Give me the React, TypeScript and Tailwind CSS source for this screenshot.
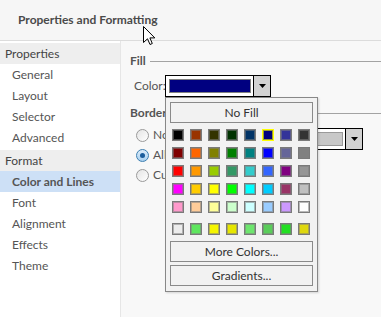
import React from "react";

const rows: string[][] = [
  ["#000000", "#993300", "#333300", "#003300", "#003366", "#000080", "#333399", "#333333"],
  ["#800000", "#ff6600", "#808000", "#008000", "#008080", "#0000ff", "#666699", "#808080"],
  ["#ff0000", "#ff9900", "#99cc00", "#339966", "#33cccc", "#3366ff", "#800080", "#969696"],
  ["#ff00ff", "#ffcc00", "#ffff00", "#00ff00", "#00ffff", "#00ccff", "#993366", "#c0c0c0"],
  ["#ff99cc", "#ffcc99", "#ffff99", "#ccffcc", "#ccffff", "#99ccff", "#cc99ff", "#ffffff"],
];
const recent = ["#ececec", "#5ee65e", "#f5f500", "#e6e600", "#6ee66e", "#5acd5a", "#22e022", "#dfd80f"];

const nav = [
  { title: "Properties", items: ["General", "Layout", "Selector", "Advanced"] },
  { title: "Format", items: ["Color and Lines", "Font", "Alignment", "Effects", "Theme"] },
];

function Arrow() {
  return (
    <svg width="7" height="4" viewBox="0 0 7 4">
      <path d="M0 0 H7 L3.5 4 Z" fill="#000" />
    </svg>
  );
}

function Combo({ fill, bar, className }: { fill: string; bar: string; className?: string }) {
  return (
    <div className={"flex h-[22px] border border-black bg-white " + (className ?? "")}>
      <div className="flex-1 pl-[3px] pr-[2px] py-[3px]">
        <div className="h-full border" style={{ background: fill, borderColor: bar }} />
      </div>
      <div className="w-[17px] border-l border-black bg-[#d2d2d2] flex items-center justify-center">
        <Arrow />
      </div>
    </div>
  );
}

function Section({ label }: { label: string }) {
  return (
    <div className="flex items-center h-[16px] gap-[4px]">
      <span className="font-bold text-[#555]">{label}</span>
      <div className="flex-1 h-px bg-[#a3a3a3]" />
    </div>
  );
}

function Radio({ checked, label }: { checked?: boolean; label: string }) {
  return (
    <div className="flex items-center h-[20px] gap-[4px]">
      {checked ? (
        <div className="w-[13px] h-[13px] rounded-full border border-[#3c7fb1] bg-gradient-to-b from-[#dcecf9] to-[#a9d0f0] flex items-center justify-center">
          <div className="w-[5px] h-[5px] rounded-full bg-[#1b5d9c]" />
        </div>
      ) : (
        <div className="w-[13px] h-[13px] rounded-full border border-[#9a9a9a] bg-gradient-to-br from-[#e4e4e4] to-white" />
      )}
      <span className="text-[#555]">{label}</span>
    </div>
  );
}

function PopButton({ children }: { children: React.ReactNode }) {
  return (
    <div className="h-[21px] border border-[#8a8a8a] bg-[#f2f2f2] flex items-center justify-center text-[#333]">
      {children}
    </div>
  );
}

function Swatch({ color, selected }: { color: string; selected?: boolean }) {
  return (
    <div
      className={
        "w-[12px] h-[12px] border " +
        (selected
          ? "border-[#ffff00] shadow-[inset_0_0_0_1px_rgba(255,255,0,0.6)]"
          : "border-[#7a7a7a] shadow-[inset_0_0_0_1px_rgba(128,128,128,0.55)]")
      }
      style={{ background: color }}
    />
  );
}

export default function App() {
  return (
    <div className="relative w-[381px] h-[317px] overflow-hidden bg-[#f8f8f8] font-['Lato','Liberation_Sans',sans-serif] text-[12px] leading-none">
      <div className="h-[41px] bg-[#f6f6f6] border-b border-[#dcdcdc] flex items-center pl-[18px] pb-[1px] font-bold text-[#4a4a4a]">
        Properties and Formatting
      </div>

      <div className="flex h-[276px]">
        <div className="w-[121px] bg-white border-r border-[#e6e6e6] pt-[2px]">
          {nav.map((g, gi) => (
            <div key={g.title} className={gi > 0 ? "mt-[2px]" : ""}>
              <div className="h-[21px] bg-[#eeeeee] flex items-center pl-[5px] text-[#444]">{g.title}</div>
              {g.items.map((it) => (
                <div
                  key={it}
                  className={
                    "h-[21px] flex items-center pl-[12px] " +
                    (it === "Color and Lines" ? "bg-[#cde0f6] font-bold text-[#555]" : "text-[#555]")
                  }
                >
                  {it}
                </div>
              ))}
            </div>
          ))}
        </div>

        <div className="flex-1 pl-[9px] pt-[12px]">
          <Section label="Fill" />
          <div className="flex items-center mt-[6px] pl-[4px]">
            <span className="w-[31px] text-[#555]">Color:</span>
            <Combo fill="#000080" bar="#808080" className="w-[106px]" />
          </div>
          <div className="mt-[8px]">
            <Section label="Border" />
          </div>
          <div className="flex mt-[4px]">
            <div className="pl-[6px]">
              <Radio label="None" />
              <Radio label="All" checked />
              <Radio label="Custom" />
            </div>
            <Combo fill="#c8c8c8" bar="#9a9a9a" className="ml-auto mr-[18px] mt-[3px] w-[110px]" />
          </div>
        </div>
      </div>

      <div className="absolute left-[165px] top-[97px] w-[153px] h-[195px] border border-[#888] bg-[#f2f2f2] px-[4px] pt-[4px] shadow-[1px_1px_2px_rgba(0,0,0,0.15)]">
        <div className="w-[143px]">
          <PopButton>No Fill</PopButton>
          <div className="mt-[6px] pl-[2px] flex flex-col gap-[6px]">
            {rows.map((r, i) => (
              <div key={i} className="flex gap-[6px]">
                {r.map((c, j) => (
                  <Swatch key={j} color={c} selected={i === 0 && j === 5} />
                ))}
              </div>
            ))}
            <div className="flex gap-[6px] mt-[4px]">
              {recent.map((c, j) => (
                <Swatch key={j} color={c} />
              ))}
            </div>
          </div>
          <div className="mt-[6px]">
            <PopButton>More Colors...</PopButton>
          </div>
          <div className="mt-[3px]">
            <PopButton>Gradients...</PopButton>
          </div>
        </div>
      </div>

      <svg className="absolute left-[143px] top-[26px]" width="13" height="20" viewBox="0 0 13 20">
        <path d="M0.5 0.5 V16.5 L4.5 12.8 L7 18.5 L9.3 17.5 L6.9 11.9 H11.8 Z" fill="#fff" stroke="#000" strokeWidth="1" strokeLinejoin="miter" />
      </svg>
    </div>
  );
}
